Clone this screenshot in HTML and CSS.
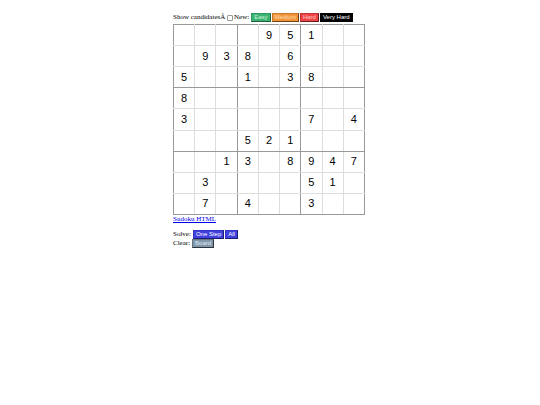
FILE: index.html
```
<!DOCTYPE html>
<html lang="en">

<head>
    <meta charset="UTF-8">
    <meta name="viewport" content="width=device-width, initial-scale=1.0">
    <title>Sudoku</title>
    <link rel="stylesheet" href="styles.css">
</head>

<body>
    <div class="sudoku-main">
        <header class="toolbar">
            <label for="candidates">Show candidatesÂ&nbsp;</label>
            <input type="checkbox" id="candidates" class="check">
            <span class="caption">New:</span>
            <div class="buttons">
                <button type="button" class="btn easy">Easy</button>
                <button type="button" class="btn medium">Medium</button>
                <button type="button" class="btn hard">Hard</button>
                <button type="button" class="btn very-hard">Very Hard</button>
            </div>
        </header>
        <table class="board">
            <tbody>
                <tr><td></td><td></td><td></td><td></td><td>9</td><td>5</td><td>1</td><td></td><td></td></tr>
                <tr><td></td><td>9</td><td>3</td><td>8</td><td></td><td>6</td><td></td><td></td><td></td></tr>
                <tr><td>5</td><td></td><td></td><td>1</td><td></td><td>3</td><td>8</td><td></td><td></td></tr>
                <tr><td>8</td><td></td><td></td><td></td><td></td><td></td><td></td><td></td><td></td></tr>
                <tr><td>3</td><td></td><td></td><td></td><td></td><td></td><td>7</td><td></td><td>4</td></tr>
                <tr><td></td><td></td><td></td><td>5</td><td>2</td><td>1</td><td></td><td></td><td></td></tr>
                <tr><td></td><td></td><td>1</td><td>3</td><td></td><td>8</td><td>9</td><td>4</td><td>7</td></tr>
                <tr><td></td><td>3</td><td></td><td></td><td></td><td></td><td>5</td><td>1</td><td></td></tr>
                <tr><td></td><td>7</td><td></td><td>4</td><td></td><td></td><td>3</td><td></td><td></td></tr>
            </tbody>
        </table>
        <a class="link" href="#">Sudoku HTML</a>
        <footer>
            <div class="toolbar">
                <span class="caption">Solve:</span>
                <div class="buttons">
                    <button type="button" class="btn solve">One Step</button>
                    <button type="button" class="btn solve">All</button>
                </div>
            </div>
            <div class="toolbar">
                <span class="caption">Clear:</span>
                <button type="button" class="btn clear">Board</button>
            </div>
        </footer>
    </div>
</body>

</html>
```
FILE: styles.css
```
body {
    margin: 0;
    padding: 13px 8px;
    font-family: "Liberation Serif", serif;
    font-size: 7px;
    line-height: 9px;
    color: black;
    background-color: white;
}

.sudoku-main {
    max-width: 194px;
    margin: 0 auto;
}

.toolbar {
    display: flex;
    align-items: center;
    white-space: nowrap;
}

.caption {
    margin-right: 2px;
}

.check {
    appearance: none;
    width: 6px;
    height: 6px;
    margin: 0 1px 0 0;
    border: 1px solid #999;
    border-radius: 1px;
    background-color: white;
}

.check:checked {
    background-color: dodgerblue;
}

.buttons {
    display: flex;
    gap: 1px;
}

.btn {
    height: 9px;
    padding: 0 2px;
    border: 1px solid;
    font-family: "Liberation Sans", sans-serif;
    font-size: 6px;
    line-height: 7px;
    color: white;
}

.easy {
    background-color: mediumseagreen;
    border-color: #2f9a60 #1f5f3c #1f5f3c #2f9a60;
    color: #c8f0d8;
}

.medium {
    background-color: #f0953a;
    border-color: #c47a28 #6e4316 #6e4316 #c47a28;
    color: #ffdcb4;
}

.hard {
    background-color: #ee4444;
    border-color: #c03434 #6a1c1c #6a1c1c #c03434;
    color: #ffc8c8;
}

.very-hard {
    background-color: black;
    border-color: black;
}

.solve {
    background-color: #4040e0;
    border-color: #3434c0 #1c1c70 #1c1c70 #3434c0;
}

.clear {
    background-color: #8296aa;
    border-color: #66747f #2c343c #2c343c #66747f;
    color: #dce8f4;
}

.board {
    width: 192px;
    height: 191px;
    margin-top: 2px;
    table-layout: fixed;
    border-collapse: collapse;
    border: 1px solid #999;
    font-family: "Liberation Sans", sans-serif;
    font-size: 11px;
}

.board td {
    padding: 0;
    border: 1px solid #ddd;
    text-align: center;
    vertical-align: middle;
}

/* heavier lines round each 3x3 box */
.board td:nth-child(3n+1) {
    border-left-color: #999;
}

.board td:nth-child(3n) {
    border-right-color: #999;
}

.board tr:nth-child(3n+1) td {
    border-top-color: #999;
}

.board tr:nth-child(3n) td {
    border-bottom-color: #999;
}

.link {
    display: block;
    width: fit-content;
    color: #0000ee;
}

footer {
    margin-top: 6px;
}
```
